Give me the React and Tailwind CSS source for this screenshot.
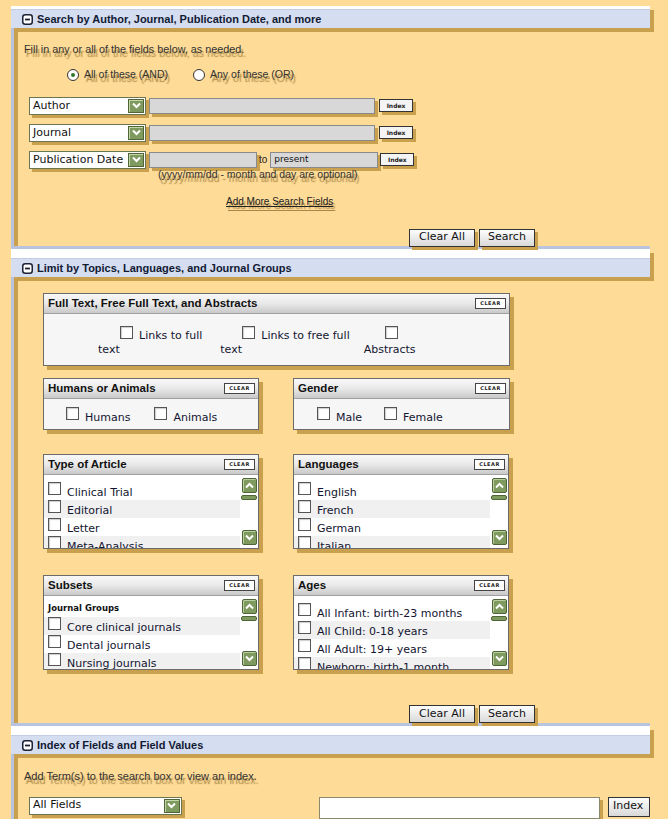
import React from "react";

function Minus() {
  return (
    <svg width="11" height="11" viewBox="0 0 11 11" className="shrink-0">
      <rect x="0.75" y="0.75" width="9.5" height="9.5" rx="2.5" fill="#fff" stroke="#1d2233" strokeWidth="1.5" />
      <rect x="3" y="4.6" width="5" height="1.8" fill="#1d2233" />
    </svg>
  );
}

function SectionHeader({ title, top }) {
  return (
    <div className={`bg-white shadow-[4px_4px_0_#c9a04e] ${top}`}>
      <div className="h-[19px] bg-[#d5ddf1] border-t border-[#c3cce6] flex items-center pl-[11px] gap-[4px]">
        <Minus />
        <span className="font-['Liberation_Sans',sans-serif] font-bold text-[11px] text-[#111a33]">{title}</span>
      </div>
    </div>
  );
}

function Arrow({ up }) {
  return (
    <div className="w-[15px] h-[15px] bg-[#7e9a5e] border border-[#4f6536] rounded-[2px] flex items-center justify-center shadow-[inset_1px_1px_0_#b9cfa0]">
      <svg width="9" height="7" viewBox="0 0 9 7">
        <path d={up ? "M1 5.5 L4.5 2 L8 5.5" : "M1 1.5 L4.5 5 L8 1.5"} fill="none" stroke="#fff" strokeWidth="2" />
      </svg>
    </div>
  );
}

function SelectBox({ label, width }) {
  return (
    <div className={`h-[18px] bg-white border border-[#6b7650] shadow-[3px_3px_0_#c9a04e] flex items-center justify-between pl-[3px] pr-[1px] ${width}`}>
      <span className="font-['DejaVu_Sans',sans-serif] text-[11px] text-[#111]">{label}</span>
      <div className="w-[16px] h-[14px] bg-[#7e9a5e] border border-[#4f6536] flex items-center justify-center shadow-[inset_1px_1px_0_#c2d6aa]">
        <svg width="9" height="7" viewBox="0 0 9 7">
          <path d="M1 1.5 L4.5 5 L8 1.5" fill="none" stroke="#fff" strokeWidth="2" />
        </svg>
      </div>
    </div>
  );
}

function TextInput({ width, value }) {
  return (
    <div className={`h-[16px] bg-[#d8d8d8] border border-[#8a8a8a] shadow-[3px_3px_0_#c9a04e] flex items-center pl-[3px] font-['DejaVu_Sans',sans-serif] text-[9px] text-[#111] ${width}`}>
      {value}
    </div>
  );
}

function IndexBtn() {
  return (
    <div className="w-[34px] h-[13px] bg-[#f4f4f4] border border-[#333] shadow-[3px_3px_0_#c9a04e] flex items-center justify-center font-['DejaVu_Sans',sans-serif] font-bold text-[6px] text-[#222]">
      Index
    </div>
  );
}

function Button({ label, width }) {
  return (
    <div className={`h-[18px] bg-linear-to-b from-[#fdfdfd] to-[#d9d9d9] border border-[#333] shadow-[3px_3px_0_#c9a04e] flex items-center justify-center font-['DejaVu_Sans',sans-serif] text-[11px] text-[#111] ${width}`}>
      {label}
    </div>
  );
}

function Check() {
  return <span className="inline-block w-[13px] h-[13px] bg-white border border-[#555] shadow-[inset_1px_1px_1px_#ccc] shrink-0" />;
}

function Box({ title, width, height, clear = true, children }) {
  return (
    <div className={`bg-[#f6f6f6] border border-[#6b6b6b] shadow-[4px_4px_0_#c9a04e] flex flex-col overflow-hidden ${width} ${height}`}>
      <div className="h-[20px] shrink-0 bg-linear-to-b from-[#f8f8f8] via-[#e9e9e9] to-[#c9c9c9] border-b border-[#a0a0a0] flex items-center justify-between pl-[4px] pr-[3px]">
        <span className="font-['Liberation_Sans',sans-serif] font-bold text-[11.5px] text-[#111]">{title}</span>
        {clear && (
          <span className="w-[31px] h-[11px] bg-white border border-[#444] flex items-center justify-center font-['DejaVu_Sans',sans-serif] font-bold text-[5px] tracking-[0.5px] text-[#222]">
            CLEAR
          </span>
        )}
      </div>
      {children}
    </div>
  );
}

function ListBox({ title, items, header }) {
  return (
    <Box title={title} width="w-[216px]" height="h-[95px]">
      <div className="flex flex-1 bg-white min-h-0">
        <div className={`flex-1 flex flex-col ${header ? "pt-[3px]" : "pt-[7px]"}`}>
          {header && (
            <div className="h-[18px] shrink-0 flex items-center pl-[4px] font-['DejaVu_Sans',sans-serif] font-bold text-[8.5px] text-[#111]">
              {header}
            </div>
          )}
          {items.map((it, i) => (
            <div
              key={it}
              className={`h-[18px] shrink-0 flex items-start gap-[6px] pl-[4px] font-['DejaVu_Sans',sans-serif] text-[11px] leading-[13px] text-[#131530] ${
                (i + (header ? 1 : 0)) % 2 === 1 ? "bg-[#f0f0f0]" : "bg-white"
              }`}
            >
              <Check />
              <span className="whitespace-nowrap pt-[4px]">{it}</span>
            </div>
          ))}
        </div>
        <div className="w-[18px] flex flex-col items-center pt-[3px] pb-[3px] bg-white">
          <Arrow up />
          <div className="w-[16px] h-[5px] mt-[2px] bg-[#7e9a5e] border border-[#4f6536] rounded-[2px]" />
          <div className="flex-1" />
          <Arrow />
        </div>
      </div>
    </Box>
  );
}

const shadowText = "[text-shadow:2px_4px_1px_rgba(110,80,20,0.6)]";

export default function App() {
  return (
    <div className="w-[668px] h-[819px] bg-[#fedb97] pt-[6px] overflow-hidden">
      <div className="ml-[11px] w-[639px]">
        {/* section 1 */}
        <SectionHeader title="Search by Author, Journal, Publication Date, and more" top="pt-[3px]" />
        <div className="h-[221px] border-l-[3px] border-b-[3px] border-[#b8c3df] shadow-[inset_4px_0_0_#c9a04e] pl-[10px] flex flex-col">
          <div className={`mt-[13px] font-['Liberation_Sans',sans-serif] text-[10.8px] text-[#333] ${shadowText}`}>
            Fill in any or all of the fields below, as needed.
          </div>
          <div className={`mt-[10px] flex items-center font-['Liberation_Sans',sans-serif] text-[10.5px] text-[#333] ${shadowText}`}>
            <span className="ml-[43px] w-[12px] h-[12px] rounded-full bg-white border border-[#333] flex items-center justify-center">
              <span className="w-[4px] h-[4px] rounded-full bg-[#2d7a2d]" />
            </span>
            <span className="ml-[5px]">All of these (AND)</span>
            <span className="ml-[25px] w-[12px] h-[12px] rounded-full bg-white border border-[#333]" />
            <span className="ml-[5px]">Any of these (OR)</span>
          </div>
          <div className="mt-[14px] flex items-center ml-[5px]">
            <SelectBox label="Author" width="w-[117px]" />
            <div className="ml-[3px]"><TextInput width="w-[226px]" /></div>
            <div className="ml-[4px]"><IndexBtn /></div>
          </div>
          <div className="mt-[9px] flex items-center ml-[5px]">
            <SelectBox label="Journal" width="w-[117px]" />
            <div className="ml-[3px]"><TextInput width="w-[226px]" /></div>
            <div className="ml-[4px]"><IndexBtn /></div>
          </div>
          <div className="mt-[9px] flex items-center ml-[5px]">
            <SelectBox label="Publication Date" width="w-[117px]" />
            <div className="ml-[3px]"><TextInput width="w-[108px]" /></div>
            <span className="ml-[2px] font-['Liberation_Sans',sans-serif] text-[10px] text-[#222]">to</span>
            <div className="ml-[3px]"><TextInput width="w-[108px]" value="present" /></div>
            <div className="ml-[2px]"><IndexBtn /></div>
          </div>
          <div className={`-mt-[2px] ml-[134px] font-['Liberation_Sans',sans-serif] text-[10.5px] text-[#333] ${shadowText}`}>
            (yyyy/mm/dd - month and day are optional)
          </div>
          <div className={`mt-[11px] ml-[202px] font-['Liberation_Sans',sans-serif] text-[10px] text-[#222] underline ${shadowText}`}>
            Add More Search Fields
          </div>
          <div className="mt-[20px] ml-[385px] flex gap-[4px]">
            <Button label="Clear All" width="w-[66px]" />
            <Button label="Search" width="w-[56px]" />
          </div>
        </div>

        {/* section 2 */}
        <SectionHeader title="Limit by Topics, Languages, and Journal Groups" top="pt-[9px]" />
        <div className="h-[449px] border-l-[3px] border-b-[3px] border-[#b8c3df] shadow-[inset_4px_0_0_#c9a04e] pl-[29px] flex flex-col">
          <div className="mt-[16px]">
            <Box title="Full Text, Free Full Text, and Abstracts" width="w-[467px]" height="h-[73px]">
              <div className="flex font-['DejaVu_Sans',sans-serif] text-[11px] text-[#131530] pt-[12px] leading-[14px]">
                <div className="ml-[54px] flex flex-col">
                  <div className="flex items-start pl-[22px] gap-[6px]"><Check /><span className="pt-[3px]">Links to full</span></div>
                  <span>text</span>
                </div>
                <div className="ml-[18px] flex flex-col">
                  <div className="flex items-start pl-[22px] gap-[6px]"><Check /><span className="pt-[3px]">Links to free full</span></div>
                  <span>text</span>
                </div>
                <div className="ml-[14px] flex flex-col">
                  <div className="flex items-start pl-[21px] h-[17px]"><Check /></div>
                  <span>Abstracts</span>
                </div>
              </div>
            </Box>
          </div>
          <div className="mt-[12px] flex gap-[34px]">
            <Box title="Humans or Animals" width="w-[216px]" height="h-[52px]">
              <div className="flex items-start pt-[8px] pl-[22px] font-['DejaVu_Sans',sans-serif] text-[11px] leading-[13px] text-[#131530]">
                <Check /><span className="ml-[6px] pt-[4px]">Humans</span>
                <span className="ml-[24px]"><Check /></span><span className="ml-[6px] pt-[4px]">Animals</span>
              </div>
            </Box>
            <Box title="Gender" width="w-[217px]" height="h-[52px]">
              <div className="flex items-start pt-[8px] pl-[23px] font-['DejaVu_Sans',sans-serif] text-[11px] leading-[13px] text-[#131530]">
                <Check /><span className="ml-[6px] pt-[4px]">Male</span>
                <span className="ml-[22px]"><Check /></span><span className="ml-[6px] pt-[4px]">Female</span>
              </div>
            </Box>
          </div>
          <div className="mt-[24px] flex gap-[34px]">
            <ListBox title="Type of Article" items={["Clinical Trial", "Editorial", "Letter", "Meta-Analysis"]} />
            <ListBox title="Languages" items={["English", "French", "German", "Italian"]} />
          </div>
          <div className="mt-[26px] flex gap-[34px]">
            <ListBox title="Subsets" header="Journal Groups" items={["Core clinical journals", "Dental journals", "Nursing journals"]} />
            <ListBox title="Ages" items={["All Infant: birth-23 months", "All Child: 0-18 years", "All Adult: 19+ years", "Newborn: birth-1 month"]} />
          </div>
          <div className="mt-[35px] ml-[366px] flex gap-[4px]">
            <Button label="Clear All" width="w-[66px]" />
            <Button label="Search" width="w-[56px]" />
          </div>
        </div>

        {/* section 3 */}
        <SectionHeader title="Index of Fields and Field Values" top="pt-[9px]" />
        <div className="h-[80px] border-l-[3px] border-[#b8c3df] shadow-[inset_4px_0_0_#c9a04e] pl-[10px] flex flex-col overflow-hidden">
          <div className={`mt-[14px] font-['Liberation_Sans',sans-serif] text-[11px] text-[#333] ${shadowText}`}>
            Add Term(s) to the search box or view an index.
          </div>
          <div className="mt-[12px] flex items-start ml-[5px]">
            <SelectBox label="All Fields" width="w-[155px]" />
            <div className="ml-[137px] w-[286px] h-[22px] bg-white border border-[#8a8a6a] shadow-[3px_3px_0_#c9a04e]" />
            <div className="ml-[8px] w-[42px] h-[20px] shrink-0 bg-linear-to-b from-[#fdfdfd] to-[#d9d9d9] border border-[#333] flex items-center pl-[4px] font-['DejaVu_Sans',sans-serif] text-[11px] text-[#111]">
              Index
            </div>
          </div>
        </div>
      </div>
    </div>
  );
}
